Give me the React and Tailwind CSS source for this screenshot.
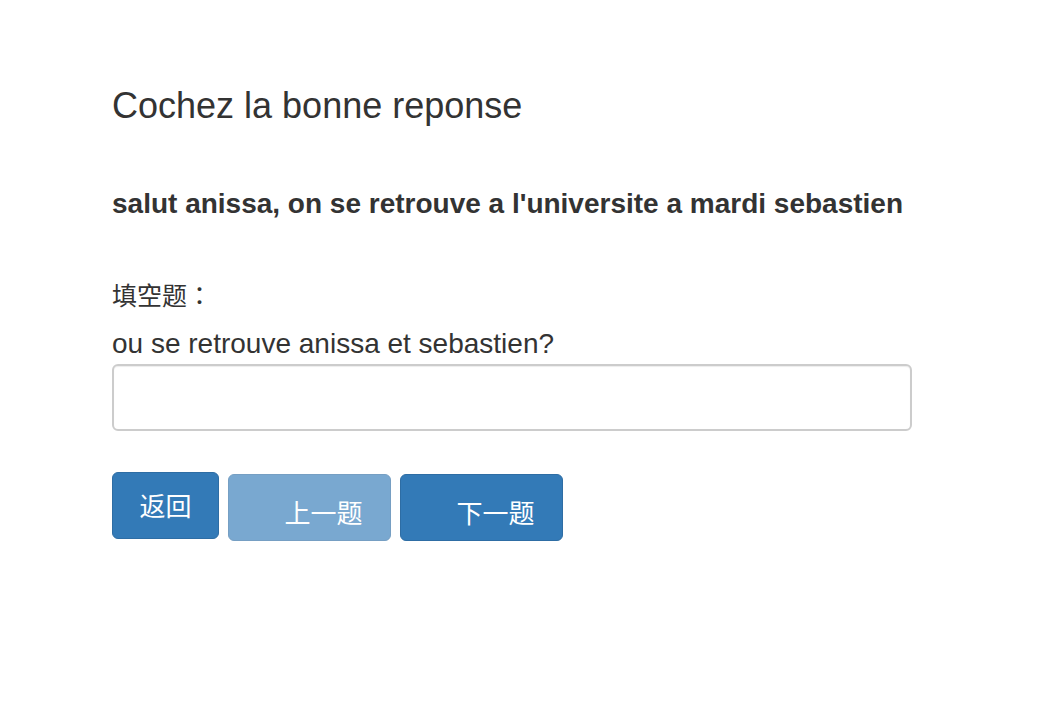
import React from 'react';

export default function App() {
  return (
    <div className="min-h-screen bg-white text-[#333333] font-['Liberation_Sans',Arial,sans-serif]">
      <div className="pl-[112px] pt-[86px] w-[912px]">
        <h1 className="text-[36px] leading-[40px] font-normal">Cochez la bonne reponse</h1>

        <p className="mt-[62px] text-[28px] leading-[32px] font-bold">
          salut anissa, on se retrouve a l'universite a mardi sebastien
        </p>

        <div className="mt-[60px] text-[25px] leading-[28px] font-['Noto_Sans_CJK_TC',sans-serif]">填空题：</div>

        <label className="block mt-[20px] text-[28px] leading-[32px]">ou se retrouve anissa et sebastien?</label>
        <input
          type="text"
          className="block mt-[4px] w-full h-[67px] px-4 border-2 border-[#cccccc] rounded-[6px] shadow-[inset_0_1px_1px_rgba(0,0,0,0.075)] outline-none"
        />

        <div className="mt-[41px] flex items-start gap-[9px] font-['Noto_Sans_CJK_SC',sans-serif] text-white">
          <button className="w-[107px] h-[67px] bg-[#337ab7] border border-[#2e6da4] rounded-[6px] text-[26px] leading-none pb-[2px]">
            返回
          </button>
          <button
            disabled
            className="mt-[2px] w-[163px] h-[67px] bg-[#337ab7] border border-[#2e6da4] rounded-[6px] text-[26px] leading-none opacity-65 pl-[28px] pt-[9px]"
          >
            上一题
          </button>
          <button className="mt-[2px] w-[163px] h-[67px] bg-[#337ab7] border border-[#2e6da4] rounded-[6px] text-[26px] leading-none pl-[28px] pt-[9px]">
            下一题
          </button>
        </div>
      </div>
    </div>
  );
}
